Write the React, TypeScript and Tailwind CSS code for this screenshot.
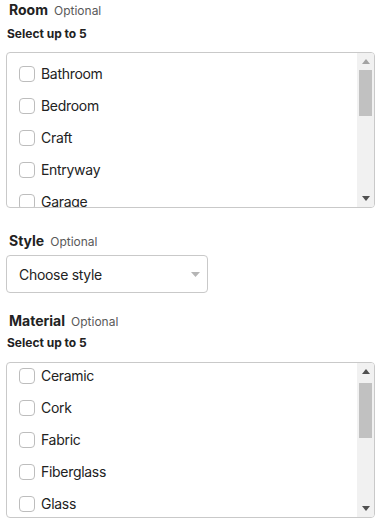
import React from "react";

const rooms = ["Bathroom", "Bedroom", "Craft", "Entryway", "Garage", "Kitchen", "Laundry"];
const materials = ["Ceramic", "Cork", "Fabric", "Fiberglass", "Glass", "Leather", "Metal"];

function Arrow({ up, active }: { up: boolean; active: boolean }) {
  return (
    <svg width="8" height="5" viewBox="0 0 8 5" className="block">
      <polygon
        points={up ? "0,5 8,5 4,0" : "0,0 8,0 4,5"}
        fill={active ? "#505050" : "#a3a3a3"}
      />
    </svg>
  );
}

function ScrollList({
  items,
  offset,
  thumbTop,
  thumbH,
  upActive,
}: {
  items: string[];
  offset: string;
  thumbTop: string;
  thumbH: string;
  upActive: boolean;
}) {
  return (
    <div className="flex h-[156px] w-[369px] overflow-hidden rounded-[4px] border border-[#c9c9c9] bg-white">
      <div className="flex-1 overflow-hidden">
        <div className={offset}>
          {items.map((it) => (
            <div key={it} className="flex h-8 items-center pl-[12px]">
              <span className="h-4 w-4 shrink-0 rounded-[4px] border border-[#bdbdbd] bg-white" />
              <span className="ml-[6px] text-[14px] leading-5 tracking-[-0.3px] text-[#222]">{it}</span>
            </div>
          ))}
        </div>
      </div>
      <div className="flex w-[17px] flex-col bg-[#f1f1f1]">
        <div className="flex h-[17px] items-center justify-center">
          <Arrow up active={upActive} />
        </div>
        <div className={`mx-[2px] bg-[#c1c1c1] ${thumbTop} ${thumbH}`} />
        <div className="flex-1" />
        <div className="flex h-[17px] items-center justify-center">
          <Arrow up={false} active />
        </div>
      </div>
    </div>
  );
}

function Label({ title }: { title: string }) {
  return (
    <div className="flex items-baseline pl-[3px] leading-5">
      <span className="text-[14px] font-bold text-[#222]">{title}</span>
      <span className="ml-[6px] text-[12px] text-[#595959]">Optional</span>
    </div>
  );
}

export default function App() {
  return (
    <div
      className="h-[531px] w-[381px] bg-white px-[6px] text-[#222]"
      style={{ fontFamily: "Inter, 'Noto Sans', sans-serif" }}
    >
      <Label title="Room" />
      <div className="mt-[5px] pl-[1px] text-[12px] font-bold leading-4 text-[#222]">Select up to 5</div>
      <div className="mt-[10px]">
        <ScrollList items={rooms} offset="pt-[5px]" thumbTop="mt-0" thumbH="h-[46px]" upActive={false} />
      </div>
      <div className="mt-[23px]">
        <Label title="Style" />
      </div>
      <div className="mt-[3px] flex h-[38px] w-[202px] items-center justify-between rounded-[4px] border border-[#c9c9c9] bg-white pl-[12px] pr-[7px]">
        <span className="text-[14px] tracking-[-0.3px] text-[#222]">Choose style</span>
        <svg width="9" height="5" viewBox="0 0 9 5">
          <polygon points="0,0 9,0 4.5,5" fill="#b5b5b5" />
        </svg>
      </div>
      <div className="mt-[18px]">
        <Label title="Material" />
      </div>
      <div className="mt-[3px] pl-[1px] text-[12px] font-bold leading-4 text-[#222]">Select up to 5</div>
      <div className="mt-[11px]">
        <ScrollList items={materials} offset="-mt-[3px]" thumbTop="mt-[3px]" thumbH="h-[55px]" upActive />
      </div>
    </div>
  );
}
